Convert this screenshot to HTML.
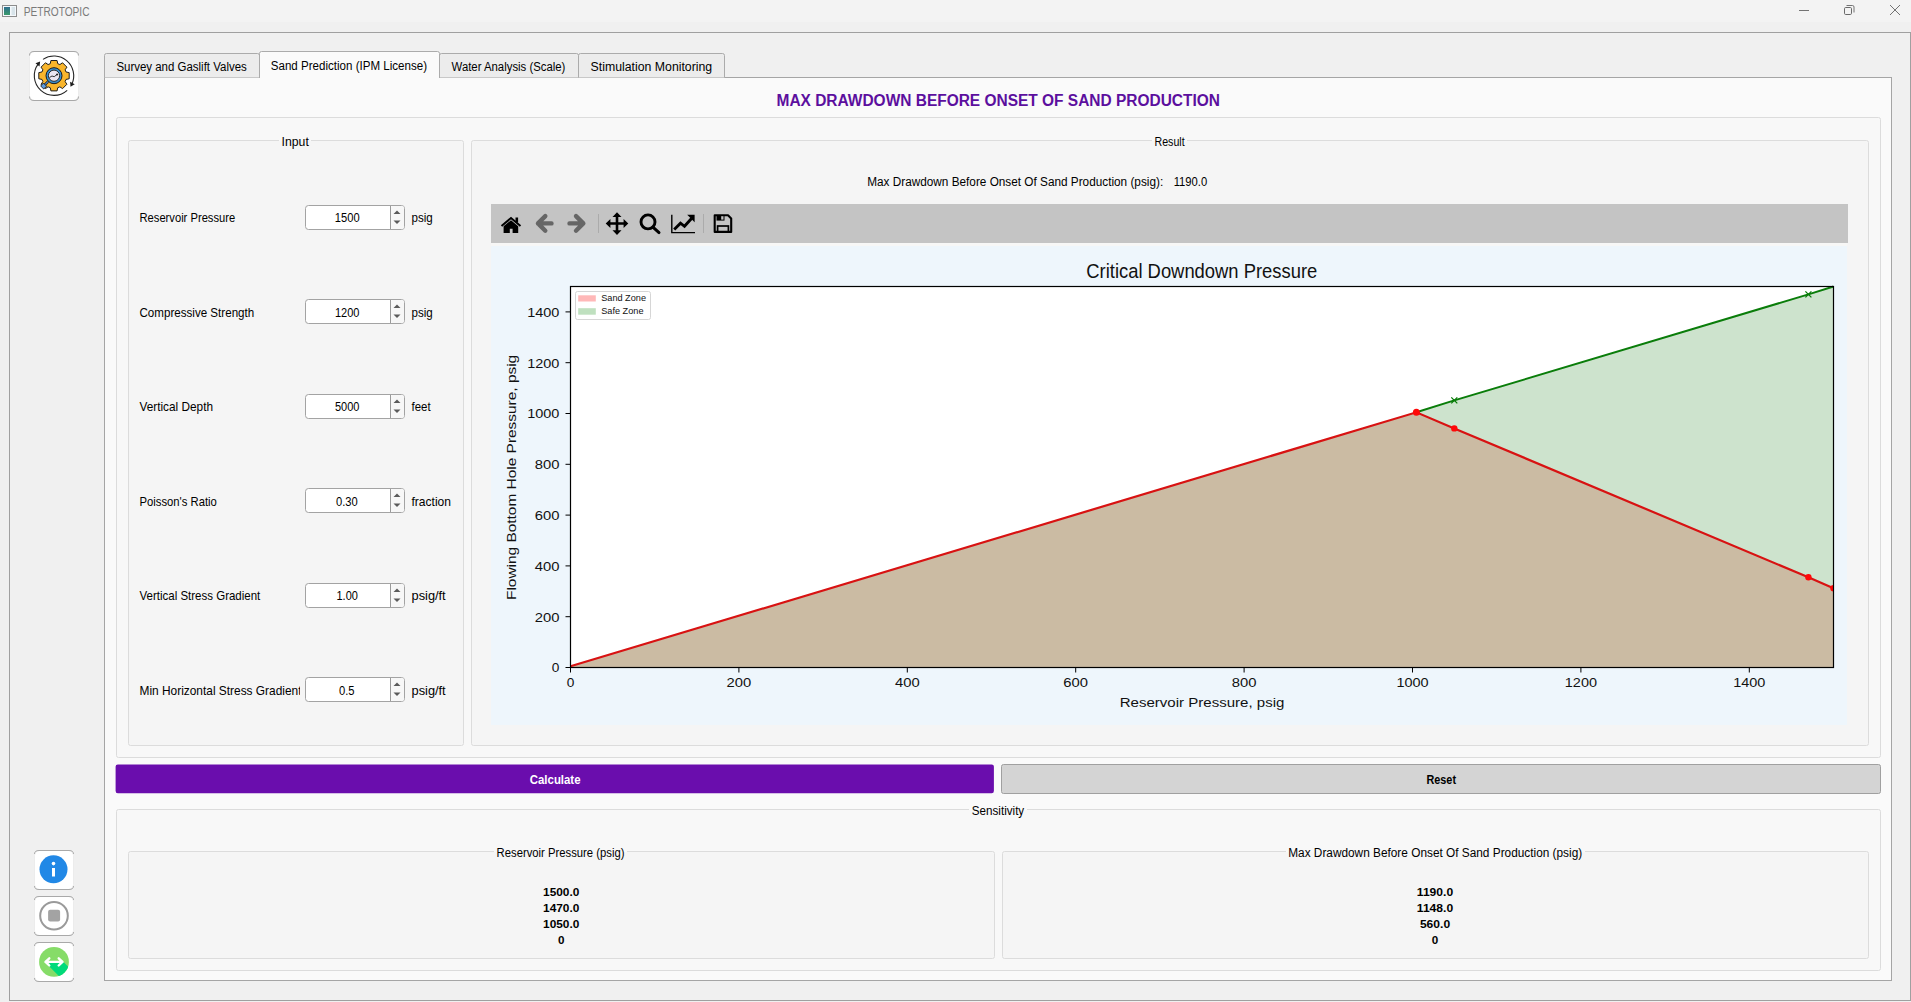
<!DOCTYPE html><html><head><meta charset="utf-8"><style>html,body{margin:0;padding:0;background:#f0f0f0;overflow:hidden}svg{display:block}text{font-family:"Liberation Sans",sans-serif}</style></head><body>
<svg width="1911" height="1002" viewBox="0 0 1911 1002">
<rect x="0" y="0" width="1911" height="1002" rx="0" fill="#f0f0f0" stroke="none" stroke-width="1"/>
<rect x="0" y="0" width="1911" height="22" rx="0" fill="#f3f3f3" stroke="none" stroke-width="1"/>
<rect x="2.5" y="5.5" width="14" height="11" rx="0" fill="#f4f8fb" stroke="#8c8c8c" stroke-width="1"/>
<defs><linearGradient id="tg" x1="0" y1="0" x2="0" y2="1"><stop offset="0" stop-color="#2f6f8f"/><stop offset="1" stop-color="#3a9a6a"/></linearGradient></defs>
<rect x="4" y="7" width="6" height="8" rx="0" fill="url(#tg)" stroke="none" stroke-width="1"/>
<rect x="11.5" y="7" width="3.5" height="8" rx="0" fill="#d8e4ea" stroke="none" stroke-width="1"/>
<text x="23.70" y="15.70" font-size="12.5" fill="#7a7a7a" textLength="65.80" lengthAdjust="spacingAndGlyphs">PETROTOPIC</text>
<line x1="1799" y1="10.5" x2="1809" y2="10.5" stroke="#737373" stroke-width="1"/>
<rect x="1844.5" y="7.5" width="7" height="7" rx="1.2" fill="none" stroke="#6a6a6a" stroke-width="1"/>
<path d="M1846.5 5.5 H1852.5 Q1854 5.5 1854 7 V12.5" fill="none" stroke="#737373" stroke-width="1"/>
<path d="M1890 5 L1900 15 M1900 5 L1890 15" stroke="#737373" stroke-width="1"/>
<rect x="9.5" y="32.5" width="1901" height="968" rx="0" fill="#f0f0f0" stroke="#a0a0a0" stroke-width="1"/>
<rect x="29.5" y="51.5" width="49" height="49" rx="5" fill="#ffffff" stroke="#ececec" stroke-width="1"/>
<path d="M29.5 55.5 Q29.5 51.5 34 51.5 H74 Q78.5 51.5 78.5 55.5" fill="none" stroke="#a8a8a8"/>
<path d="M29.5 96.5 Q29.5 100.5 34 100.5 H74 Q78.5 100.5 78.5 96.5" fill="none" stroke="#a8a8a8"/>
<rect x="104.5" y="77.5" width="1787" height="903" rx="0" fill="#fafafa" stroke="#a5a5a5" stroke-width="1"/>
<path d="M104.5 77.5 V55.5 Q104.5 53.5 106.5 53.5 H257.5 Q259.5 53.5 259.5 55.5 V77.5" fill="#ececec" stroke="#ababab"/>
<path d="M439.5 77.5 V55.5 Q439.5 53.5 441.5 53.5 H576.5 Q578.5 53.5 578.5 55.5 V77.5" fill="#ececec" stroke="#ababab"/>
<path d="M578.5 77.5 V55.5 Q578.5 53.5 580.5 53.5 H722.5 Q724.5 53.5 724.5 55.5 V77.5" fill="#ececec" stroke="#ababab"/>
<path d="M259.5 78 V53.5 Q259.5 51.5 261.5 51.5 H437.5 Q439.5 51.5 439.5 53.5 V78" fill="#fafafa" stroke="#ababab"/>
<rect x="260" y="77" width="179" height="2" rx="0" fill="#fafafa" stroke="none" stroke-width="1"/>
<text x="116.40" y="71.30" font-size="12.5" fill="#000" textLength="130.39" lengthAdjust="spacingAndGlyphs">Survey and Gaslift Valves</text>
<text x="270.80" y="69.90" font-size="12.5" fill="#000" textLength="156.21" lengthAdjust="spacingAndGlyphs">Sand Prediction (IPM License)</text>
<text x="451.60" y="71.00" font-size="12.5" fill="#000" textLength="113.79" lengthAdjust="spacingAndGlyphs">Water Analysis (Scale)</text>
<text x="590.60" y="71.00" font-size="12.5" fill="#000" textLength="121.60" lengthAdjust="spacingAndGlyphs">Stimulation Monitoring</text>
<text x="776.50" y="105.80" font-size="16" font-weight="bold" fill="#5c0f9e" textLength="443.49" lengthAdjust="spacingAndGlyphs">MAX DRAWDOWN BEFORE ONSET OF SAND PRODUCTION</text>
<rect x="116.5" y="117.5" width="1764" height="640" rx="2" fill="#f8f8f8" stroke="#dcdcdc" stroke-width="1"/>
<rect x="128.5" y="140.5" width="335" height="605" rx="2" fill="#f5f5f5" stroke="#dcdcdc" stroke-width="1"/>
<rect x="279" y="139.8" width="32" height="1.4" rx="0" fill="#f8f8f8" stroke="none" stroke-width="1"/>
<text x="281.50" y="146.20" font-size="12.5" fill="#000" textLength="27.30" lengthAdjust="spacingAndGlyphs">Input</text>
<rect x="471.5" y="140.5" width="1397" height="605" rx="2" fill="#f5f5f5" stroke="#dcdcdc" stroke-width="1"/>
<rect x="1152" y="139.8" width="35" height="1.4" rx="0" fill="#f8f8f8" stroke="none" stroke-width="1"/>
<text x="1154.50" y="146.00" font-size="12.5" fill="#000" textLength="30.11" lengthAdjust="spacingAndGlyphs">Result</text>
<text x="139.50" y="222.00" font-size="12.2" fill="#000" textLength="95.70" lengthAdjust="spacingAndGlyphs">Reservoir Pressure</text>
<rect x="305.5" y="205.5" width="99" height="24" rx="3" fill="#ffffff" stroke="#a3a3a3" stroke-width="1"/>
<rect x="391" y="206" width="13" height="23" rx="2" fill="#f7f7f7" stroke="none" stroke-width="1"/>
<path d="M390.5 206 V229" stroke="#9a9a9a"/>
<path d="M393.5 214 L397 210.5 L400.5 214 Z" fill="#5a5a5a"/>
<path d="M393.5 220.5 L397 224 L400.5 220.5 Z" fill="#5a5a5a"/>
<text x="334.80" y="222.40" font-size="12.5" fill="#000" textLength="24.80" lengthAdjust="spacingAndGlyphs">1500</text>
<text x="411.50" y="222.40" font-size="12.2" fill="#000" textLength="21.21" lengthAdjust="spacingAndGlyphs">psig</text>
<text x="139.50" y="317.00" font-size="12.2" fill="#000" textLength="114.70" lengthAdjust="spacingAndGlyphs">Compressive Strength</text>
<rect x="305.5" y="299.5" width="99" height="24" rx="3" fill="#ffffff" stroke="#a3a3a3" stroke-width="1"/>
<rect x="391" y="300" width="13" height="23" rx="2" fill="#f7f7f7" stroke="none" stroke-width="1"/>
<path d="M390.5 300 V323" stroke="#9a9a9a"/>
<path d="M393.5 308 L397 304.5 L400.5 308 Z" fill="#5a5a5a"/>
<path d="M393.5 314.5 L397 318 L400.5 314.5 Z" fill="#5a5a5a"/>
<text x="335.00" y="317.40" font-size="12.5" fill="#000" textLength="24.50" lengthAdjust="spacingAndGlyphs">1200</text>
<text x="411.50" y="317.40" font-size="12.2" fill="#000" textLength="21.21" lengthAdjust="spacingAndGlyphs">psig</text>
<text x="139.50" y="411.00" font-size="12.2" fill="#000" textLength="73.50" lengthAdjust="spacingAndGlyphs">Vertical Depth</text>
<rect x="305.5" y="394.5" width="99" height="24" rx="3" fill="#ffffff" stroke="#a3a3a3" stroke-width="1"/>
<rect x="391" y="395" width="13" height="23" rx="2" fill="#f7f7f7" stroke="none" stroke-width="1"/>
<path d="M390.5 395 V418" stroke="#9a9a9a"/>
<path d="M393.5 403 L397 399.5 L400.5 403 Z" fill="#5a5a5a"/>
<path d="M393.5 409.5 L397 413 L400.5 409.5 Z" fill="#5a5a5a"/>
<text x="335.00" y="411.40" font-size="12.5" fill="#000" textLength="24.50" lengthAdjust="spacingAndGlyphs">5000</text>
<text x="411.50" y="411.40" font-size="12.2" fill="#000" textLength="19.10" lengthAdjust="spacingAndGlyphs">feet</text>
<text x="139.50" y="506.00" font-size="12.2" fill="#000" textLength="77.30" lengthAdjust="spacingAndGlyphs">Poisson's Ratio</text>
<rect x="305.5" y="488.5" width="99" height="24" rx="3" fill="#ffffff" stroke="#a3a3a3" stroke-width="1"/>
<rect x="391" y="489" width="13" height="23" rx="2" fill="#f7f7f7" stroke="none" stroke-width="1"/>
<path d="M390.5 489 V512" stroke="#9a9a9a"/>
<path d="M393.5 497 L397 493.5 L400.5 497 Z" fill="#5a5a5a"/>
<path d="M393.5 503.5 L397 507 L400.5 503.5 Z" fill="#5a5a5a"/>
<text x="336.00" y="506.40" font-size="12.5" fill="#000" textLength="21.70" lengthAdjust="spacingAndGlyphs">0.30</text>
<text x="411.50" y="506.40" font-size="12.2" fill="#000" textLength="39.50" lengthAdjust="spacingAndGlyphs">fraction</text>
<text x="139.50" y="600.00" font-size="12.2" fill="#000" textLength="120.81" lengthAdjust="spacingAndGlyphs">Vertical Stress Gradient</text>
<rect x="305.5" y="583.5" width="99" height="24" rx="3" fill="#ffffff" stroke="#a3a3a3" stroke-width="1"/>
<rect x="391" y="584" width="13" height="23" rx="2" fill="#f7f7f7" stroke="none" stroke-width="1"/>
<path d="M390.5 584 V607" stroke="#9a9a9a"/>
<path d="M393.5 592 L397 588.5 L400.5 592 Z" fill="#5a5a5a"/>
<path d="M393.5 598.5 L397 602 L400.5 598.5 Z" fill="#5a5a5a"/>
<text x="336.50" y="600.40" font-size="12.5" fill="#000" textLength="21.40" lengthAdjust="spacingAndGlyphs">1.00</text>
<text x="411.50" y="600.40" font-size="12.2" fill="#000" textLength="34.20" lengthAdjust="spacingAndGlyphs">psig/ft</text>
<clipPath id="clipmh"><rect x="130" y="672" width="170" height="30"/></clipPath>
<g clip-path="url(#clipmh)">
<text x="139.50" y="695.00" font-size="12.2" fill="#000" textLength="162.00" lengthAdjust="spacingAndGlyphs">Min Horizontal Stress Gradient</text>
</g>
<rect x="305.5" y="677.5" width="99" height="24" rx="3" fill="#ffffff" stroke="#a3a3a3" stroke-width="1"/>
<rect x="391" y="678" width="13" height="23" rx="2" fill="#f7f7f7" stroke="none" stroke-width="1"/>
<path d="M390.5 678 V701" stroke="#9a9a9a"/>
<path d="M393.5 686 L397 682.5 L400.5 686 Z" fill="#5a5a5a"/>
<path d="M393.5 692.5 L397 696 L400.5 692.5 Z" fill="#5a5a5a"/>
<text x="338.90" y="695.40" font-size="12.5" fill="#000" textLength="15.60" lengthAdjust="spacingAndGlyphs">0.5</text>
<text x="411.50" y="695.40" font-size="12.2" fill="#000" textLength="34.20" lengthAdjust="spacingAndGlyphs">psig/ft</text>
<text x="867.20" y="186.20" font-size="12.5" fill="#000" textLength="296.00" lengthAdjust="spacingAndGlyphs">Max Drawdown Before Onset Of Sand Production (psig):</text>
<text x="1173.70" y="186.20" font-size="12.5" fill="#000" textLength="33.50" lengthAdjust="spacingAndGlyphs">1190.0</text>
<rect x="491" y="204" width="1357" height="39" rx="0" fill="#c4c4c4" stroke="none" stroke-width="1"/>
<rect x="491" y="243" width="1356" height="3" rx="0" fill="#f7f7f6" stroke="none" stroke-width="1"/>
<rect x="491" y="246" width="1356" height="479" rx="0" fill="#eef6fc" stroke="none" stroke-width="1"/>
<rect x="570.5" y="286.5" width="1263.0" height="381.0" rx="0" fill="#ffffff" stroke="none" stroke-width="1"/>
<clipPath id="ax"><rect x="570.5" y="282.5" width="1263.0" height="385.0"/></clipPath><g clip-path="url(#ax)">
<polygon points="570.5,666.3 1416.4,412.3 1454.3,428.4 1808.4,577.3 1833.5,588.3 1833.5,667.5 570.5,667.5" fill="#cbbba3"/>
<polygon points="1416.4,412.3 1454.3,400.4 1808.4,294.4 1833.5,286.5 1833.5,588.3 1808.4,577.3 1454.3,428.4 1416.4,412.3" fill="#cde3cd"/>
<polyline points="1416.4,412.3 1454.3,400.4 1808.4,294.4 1833.5,286.5" fill="none" stroke="#0a7d0a" stroke-width="2"/>
<polyline points="570.5,666.3 1416.4,412.3 1454.3,428.4 1808.4,577.3 1833.5,588.3" fill="none" stroke="#d81212" stroke-width="2.2"/>
<circle cx="1416.4" cy="412.3" r="3.5" fill="#ff0808"/>
<circle cx="1454.3" cy="428.4" r="3.2" fill="#ff0808"/>
<circle cx="1808.4" cy="577.3" r="3.2" fill="#ff0808"/>
<circle cx="1833.5" cy="588.3" r="3.2" fill="#ff0808"/>
<path d="M1451.3 397.4 L1457.3 403.4 M1457.3 397.4 L1451.3 403.4" stroke="#0a7d0a" stroke-width="1.3"/>
<path d="M1805.4 291.4 L1811.4 297.4 M1811.4 291.4 L1805.4 297.4" stroke="#0a7d0a" stroke-width="1.3"/>
</g>
<rect x="570.5" y="286.5" width="1263.0" height="381.0" rx="0" fill="none" stroke="#000" stroke-width="1.2"/>
<path d="M570.50 667.5 V672.5" stroke="#000" stroke-width="1"/>
<text x="566.70" y="687.00" font-size="13.6" fill="#111" textLength="7.60" lengthAdjust="spacingAndGlyphs">0</text>
<path d="M565.5 667.50 H570.5" stroke="#000" stroke-width="1"/>
<text x="551.80" y="672.40" font-size="13.6" fill="#111" textLength="7.60" lengthAdjust="spacingAndGlyphs">0</text>
<path d="M738.90 667.5 V672.5" stroke="#000" stroke-width="1"/>
<text x="726.55" y="687.00" font-size="13.6" fill="#111" textLength="24.71" lengthAdjust="spacingAndGlyphs">200</text>
<path d="M565.5 616.70 H570.5" stroke="#000" stroke-width="1"/>
<text x="534.70" y="621.60" font-size="13.6" fill="#111" textLength="24.71" lengthAdjust="spacingAndGlyphs">200</text>
<path d="M907.30 667.5 V672.5" stroke="#000" stroke-width="1"/>
<text x="894.95" y="687.00" font-size="13.6" fill="#111" textLength="24.71" lengthAdjust="spacingAndGlyphs">400</text>
<path d="M565.5 565.90 H570.5" stroke="#000" stroke-width="1"/>
<text x="534.70" y="570.80" font-size="13.6" fill="#111" textLength="24.71" lengthAdjust="spacingAndGlyphs">400</text>
<path d="M1075.70 667.5 V672.5" stroke="#000" stroke-width="1"/>
<text x="1063.35" y="687.00" font-size="13.6" fill="#111" textLength="24.71" lengthAdjust="spacingAndGlyphs">600</text>
<path d="M565.5 515.10 H570.5" stroke="#000" stroke-width="1"/>
<text x="534.70" y="520.00" font-size="13.6" fill="#111" textLength="24.71" lengthAdjust="spacingAndGlyphs">600</text>
<path d="M1244.10 667.5 V672.5" stroke="#000" stroke-width="1"/>
<text x="1231.75" y="687.00" font-size="13.6" fill="#111" textLength="24.71" lengthAdjust="spacingAndGlyphs">800</text>
<path d="M565.5 464.30 H570.5" stroke="#000" stroke-width="1"/>
<text x="534.70" y="469.20" font-size="13.6" fill="#111" textLength="24.71" lengthAdjust="spacingAndGlyphs">800</text>
<path d="M1412.50 667.5 V672.5" stroke="#000" stroke-width="1"/>
<text x="1396.40" y="687.00" font-size="13.6" fill="#111" textLength="32.19" lengthAdjust="spacingAndGlyphs">1000</text>
<path d="M565.5 413.50 H570.5" stroke="#000" stroke-width="1"/>
<text x="527.20" y="418.40" font-size="13.6" fill="#111" textLength="32.19" lengthAdjust="spacingAndGlyphs">1000</text>
<path d="M1580.90 667.5 V672.5" stroke="#000" stroke-width="1"/>
<text x="1564.80" y="687.00" font-size="13.6" fill="#111" textLength="32.19" lengthAdjust="spacingAndGlyphs">1200</text>
<path d="M565.5 362.70 H570.5" stroke="#000" stroke-width="1"/>
<text x="527.20" y="367.60" font-size="13.6" fill="#111" textLength="32.19" lengthAdjust="spacingAndGlyphs">1200</text>
<path d="M1749.30 667.5 V672.5" stroke="#000" stroke-width="1"/>
<text x="1733.20" y="687.00" font-size="13.6" fill="#111" textLength="32.19" lengthAdjust="spacingAndGlyphs">1400</text>
<path d="M565.5 311.90 H570.5" stroke="#000" stroke-width="1"/>
<text x="527.20" y="316.80" font-size="13.6" fill="#111" textLength="32.19" lengthAdjust="spacingAndGlyphs">1400</text>
<text x="1086.30" y="278.10" font-size="19.3" fill="#111" textLength="231.00" lengthAdjust="spacingAndGlyphs">Critical Downdown Pressure</text>
<text x="1119.70" y="706.80" font-size="13.7" fill="#111" textLength="164.70" lengthAdjust="spacingAndGlyphs">Reservoir Pressure, psig</text>
<g transform="translate(515.5 600) rotate(-90)">
<text x="0.00" y="0.00" font-size="13.7" fill="#111" textLength="245.19" lengthAdjust="spacingAndGlyphs">Flowing Bottom Hole Pressure, psig</text>
</g>
<rect x="575.5" y="291.5" width="75" height="28" rx="2" fill="#ffffff" stroke="#d6d6d6" stroke-width="1" fill-opacity="0.8"/>
<rect x="578.2" y="295.3" width="17.6" height="6.2" rx="0" fill="#ffb8b8" stroke="none" stroke-width="1"/>
<rect x="578.2" y="308.2" width="17.6" height="6.5" rx="0" fill="#bfe0bf" stroke="none" stroke-width="1"/>
<text x="601.20" y="301.20" font-size="9.4" fill="#111" textLength="44.80" lengthAdjust="spacingAndGlyphs">Sand Zone</text>
<text x="601.20" y="314.20" font-size="9.4" fill="#111" textLength="42.30" lengthAdjust="spacingAndGlyphs">Safe Zone</text>
<path d="M501.5 226 L511 218 L520.5 226" fill="none" stroke="#000" stroke-width="2" stroke-linejoin="miter"/>
<path d="M503.6 226.3 L511 220.3 L518.2 226.3 V233 H512.6 V228.7 H509.8 V233 H503.6 Z" fill="#000"/>
<rect x="515.5" y="217.5" width="2.6" height="5" fill="#000"/>
<path d="M551.5 223.4 H538 M545.3 216.1 L538 223.4 L545.3 230.7" fill="none" stroke="#666" stroke-width="4.4" stroke-linecap="round" stroke-linejoin="round"/>
<path d="M569.5 223.4 H583.3 M576 216.1 L583.3 223.4 L576 230.7" fill="none" stroke="#666" stroke-width="4.4" stroke-linecap="round" stroke-linejoin="round"/>
<path d="M598.5 214 V233" stroke="#ababab" stroke-width="1"/>
<path d="M703.5 214 V233" stroke="#ababab" stroke-width="1"/>
<path d="M617 215 V232 M608 223.5 H626" stroke="#000" stroke-width="2.6"/>
<path d="M617 212.3 L621.5 217 H612.5 Z M617 235 L621.5 230.3 H612.5 Z M605.7 223.5 L610.4 219 V228 Z M628.3 223.5 L623.6 219 V228 Z" fill="#000"/>
<circle cx="648" cy="221.9" r="7" fill="none" stroke="#000" stroke-width="2.9"/>
<path d="M653.2 227.3 L659 232.6" stroke="#000" stroke-width="3" stroke-linecap="round"/>
<path d="M671.8 214.8 V232.6 H695" fill="none" stroke="#000" stroke-width="1.4"/>
<path d="M674.2 229.5 L680.5 223.2 L684.5 226.3 L691.5 218.5" fill="none" stroke="#000" stroke-width="2.9" stroke-linejoin="miter"/>
<path d="M694.6 214.8 L694.6 222.3 L687.2 214.8 Z" fill="#000"/>
<path d="M714.7 215.3 H728 L731.2 218.5 V231.9 H714.7 Z" fill="none" stroke="#000" stroke-width="2.1" stroke-linejoin="round"/>
<rect x="716.5" y="215" width="8" height="5.6" fill="#000"/>
<rect x="721.2" y="216.2" width="2.3" height="3.4" fill="#c4c4c4"/>
<rect x="717.6" y="226" width="10.8" height="6" fill="none" stroke="#000" stroke-width="1.7"/>
<rect x="115.6" y="764.6" width="878.3" height="28.6" rx="2.2" fill="#6a0dad" stroke="none" stroke-width="1"/>
<text x="529.80" y="783.80" font-size="12" font-weight="bold" fill="#ffffff" textLength="50.70" lengthAdjust="spacingAndGlyphs">Calculate</text>
<rect x="1001.5" y="764.5" width="879" height="29" rx="2" fill="#d4d4d4" stroke="#a0a0a0" stroke-width="1"/>
<text x="1426.50" y="783.80" font-size="12" font-weight="bold" fill="#000" textLength="29.50" lengthAdjust="spacingAndGlyphs">Reset</text>
<rect x="116.5" y="809.5" width="1764" height="161" rx="2" fill="#f8f8f8" stroke="#dcdcdc" stroke-width="1"/>
<rect x="969" y="808.8" width="58" height="1.4" rx="0" fill="#fafafa" stroke="none" stroke-width="1"/>
<text x="971.80" y="814.80" font-size="12.5" fill="#000" textLength="52.41" lengthAdjust="spacingAndGlyphs">Sensitivity</text>
<rect x="128.5" y="851.5" width="866" height="107" rx="2" fill="#f5f5f5" stroke="#dcdcdc" stroke-width="1"/>
<rect x="1002.5" y="851.5" width="866" height="107" rx="2" fill="#f5f5f5" stroke="#dcdcdc" stroke-width="1"/>
<rect x="494" y="850.8" width="133" height="1.4" rx="0" fill="#f8f8f8" stroke="none" stroke-width="1"/>
<text x="496.60" y="857.00" font-size="12.5" fill="#000" textLength="127.89" lengthAdjust="spacingAndGlyphs">Reservoir Pressure (psig)</text>
<rect x="1286" y="850.8" width="299" height="1.4" rx="0" fill="#f8f8f8" stroke="none" stroke-width="1"/>
<text x="1288.20" y="857.00" font-size="12.5" fill="#000" textLength="294.00" lengthAdjust="spacingAndGlyphs">Max Drawdown Before Onset Of Sand Production (psig)</text>
<text x="543.05" y="895.70" font-size="11.8" font-weight="bold" fill="#000" textLength="36.30" lengthAdjust="spacingAndGlyphs">1500.0</text>
<text x="543.05" y="911.80" font-size="11.8" font-weight="bold" fill="#000" textLength="36.30" lengthAdjust="spacingAndGlyphs">1470.0</text>
<text x="543.05" y="927.70" font-size="11.8" font-weight="bold" fill="#000" textLength="36.30" lengthAdjust="spacingAndGlyphs">1050.0</text>
<text x="557.95" y="943.70" font-size="11.8" font-weight="bold" fill="#000" textLength="6.50" lengthAdjust="spacingAndGlyphs">0</text>
<text x="1416.85" y="895.70" font-size="11.8" font-weight="bold" fill="#000" textLength="36.31" lengthAdjust="spacingAndGlyphs">1190.0</text>
<text x="1416.85" y="911.80" font-size="11.8" font-weight="bold" fill="#000" textLength="36.31" lengthAdjust="spacingAndGlyphs">1148.0</text>
<text x="1419.90" y="927.70" font-size="11.8" font-weight="bold" fill="#000" textLength="30.21" lengthAdjust="spacingAndGlyphs">560.0</text>
<text x="1431.75" y="943.70" font-size="11.8" font-weight="bold" fill="#000" textLength="6.50" lengthAdjust="spacingAndGlyphs">0</text>
<rect x="34.5" y="850.5" width="39" height="39" rx="5" fill="#ffffff" stroke="#ececec" stroke-width="1"/>
<path d="M34.5 854 Q34.5 850.5 39 850.5 H69 Q73.5 850.5 73.5 854" fill="none" stroke="#a9a9a9"/>
<path d="M34.5 886 Q34.5 889.5 39 889.5 H69 Q73.5 889.5 73.5 886" fill="none" stroke="#a9a9a9"/>
<rect x="34.5" y="896.5" width="39" height="39" rx="5" fill="#ffffff" stroke="#ececec" stroke-width="1"/>
<path d="M34.5 900 Q34.5 896.5 39 896.5 H69 Q73.5 896.5 73.5 900" fill="none" stroke="#a9a9a9"/>
<path d="M34.5 932 Q34.5 935.5 39 935.5 H69 Q73.5 935.5 73.5 932" fill="none" stroke="#a9a9a9"/>
<rect x="34.5" y="942.5" width="39" height="39" rx="5" fill="#ffffff" stroke="#ececec" stroke-width="1"/>
<path d="M34.5 946 Q34.5 942.5 39 942.5 H69 Q73.5 942.5 73.5 946" fill="none" stroke="#a9a9a9"/>
<path d="M34.5 978 Q34.5 981.5 39 981.5 H69 Q73.5 981.5 73.5 978" fill="none" stroke="#a9a9a9"/>
<circle cx="53.5" cy="869.3" r="14" fill="#2188e6"/>
<circle cx="53.5" cy="863.6" r="1.8" fill="#fff"/>
<rect x="52" y="868" width="3" height="8.5" fill="#fff"/>
<circle cx="54" cy="915.7" r="13.8" fill="none" stroke="#9a9a9a" stroke-width="2"/>
<rect x="48.1" y="909.8" width="12" height="11.8" rx="2" fill="#a3a3a3"/>
<clipPath id="gc"><circle cx="54" cy="961.9" r="14.9"/></clipPath>
<circle cx="54" cy="961.9" r="14.9" fill="#86dc68"/>
<path d="M49.3 963 L63 961.5 L93 991.5 L79.3 996.5 L49.3 966.5 Z" fill="#00da7a" clip-path="url(#gc)"/>
<path d="M45.5 961.9 H62.5 M49.3 958.3 L45.5 961.9 L49.3 965.5 M58.7 958.3 L62.5 961.9 L58.7 965.5" fill="none" stroke="#fff" stroke-width="2.4" stroke-linecap="round" stroke-linejoin="round"/>
<polygon points="50.28,63.66 50.92,60.51 57.08,60.51 57.72,63.66 59.88,64.56 62.56,62.78 66.92,67.14 65.14,69.82 66.04,71.98 69.19,72.62 69.19,78.78 66.04,79.42 65.14,81.58 66.92,84.26 62.56,88.62 59.88,86.84 57.72,87.74 57.08,90.89 50.92,90.89 50.28,87.74 48.12,86.84 45.44,88.62 41.08,84.26 42.86,81.58 41.96,79.42 38.81,78.78 38.81,72.62 41.96,71.98 42.86,69.82 41.08,67.14 45.44,62.78 48.12,64.56" fill="#f8b52c" stroke="#1e1e1e" stroke-width="1.0" stroke-linejoin="round"/>
<path d="M42.98 59.37 A19.7 19.7 0 0 1 72.00 83.71" fill="none" stroke="#262626" stroke-width="1.1"/>
<polygon points="70.50,86.70 74.73,84.14 70.09,81.78" fill="#1e1e1e"/>
<path d="M67.18 90.34 A19.7 19.7 0 0 1 38.06 64.12" fill="none" stroke="#262626" stroke-width="1.1"/>
<polygon points="40.14,61.51 35.48,63.13 39.52,66.41" fill="#1e1e1e"/>
<path d="M48.0 81.7 L44.0 85.7" stroke="#1e1e1e" stroke-width="2.6"/>
<path d="M48.0 81.7 L44.0 85.7" stroke="#4a8ad0" stroke-width="1.2"/>
<path d="M43.4 83.0 L46.7 86.3 L43.7 89.0 L40.7 86.0 Z" fill="#5a9ae0" stroke="#1e1e1e" stroke-width="0.9"/>
<circle cx="54.0" cy="75.7" r="8.0" fill="#3a8fd0" stroke="#1a1a1a" stroke-width="1"/>
<circle cx="54.0" cy="75.7" r="5.6" fill="#ebe6f2" stroke="#1a1a1a" stroke-width="0.9"/>
<path d="M49.4 77.5 L52.0 76.0 L54.2 76.7 L57.0 74.5" fill="none" stroke="#222" stroke-width="0.9"/>
<circle cx="57.1" cy="74.5" r="0.9" fill="#111"/>
</svg></body></html>
